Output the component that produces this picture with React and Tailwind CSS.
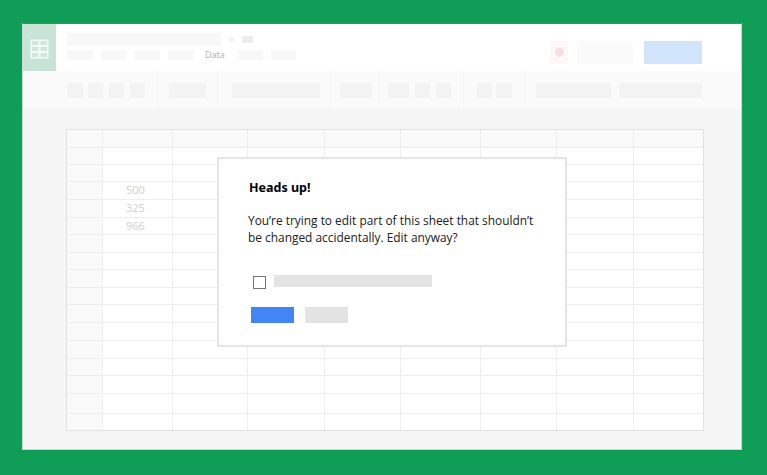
const colWidths = ['w-[36px]', 'w-[70px]', 'w-[75px]', 'w-[77px]', 'w-[76px]', 'w-[80px]', 'w-[76px]', 'w-[77px]', 'w-[71px]']
const rowHeights = ['h-[18px]', 'h-[17px]', 'h-[17px]', 'h-[18px]', 'h-[18px]', 'h-[17px]', 'h-[18px]', 'h-[17px]', 'h-[18px]', 'h-[17px]', 'h-[18px]', 'h-[18px]', 'h-[18px]', 'h-[17px]', 'h-[18px]', 'h-[20px]', 'h-[17px]']
const values = { 3: '500', 4: '325', 5: '966' }

function Sheet() {
    return (
        <div className="w-[638px] h-[302px] border border-[#e2e2e2] bg-white overflow-hidden">
            {rowHeights.map((height, r) => (
                <div key={r} className={`flex ${height} border-b border-[#eeeeee]`}>
                    {colWidths.map((width, c) => (
                        <div
                            key={c}
                            className={`${width} shrink-0 border-r border-[#eeeeee] ${c === 0 || r === 0 ? 'bg-[#f9f9f9]' : ''} ${c === 1 ? 'pl-[23px] text-[11px] leading-[16px] text-[#d2d2d2]' : ''}`}
                        >
                            {c === 1 ? values[r] : null}
                        </div>
                    ))}
                </div>
            ))}
        </div>
    )
}

function Block({ className }) {
    return <div className={`h-[15px] bg-[#f3f3f3] ${className}`} />
}

function Sep() {
    return <div className="w-px h-[38px] bg-[#f5f5f5]" />
}

function App() {
    return (
        <div className="w-[767px] h-[475px] bg-[#0f9d58] pt-[23px] pl-[22px] font-['Noto_Sans',sans-serif]">
            <div className="relative w-[720px] h-[427px] flex flex-col bg-[#f5f5f5] border border-[#cfd8d3] border-t-[#3d8f66]">
                {/* Header */}
                <div className="flex h-[47px] bg-white">
                    <div className="w-[33px] h-[47px] pt-[3px] bg-[#c7e4d6] flex items-center justify-center">
                        <svg width="19" height="20" viewBox="0 0 19 20">
                            <rect x="0.5" y="0.5" width="18" height="19" fill="#f4fbf7" />
                            <rect x="2" y="2" width="6.5" height="4" fill="#cfe8db" />
                            <rect x="10.5" y="2" width="6.5" height="4" fill="#cfe8db" />
                            <rect x="2" y="8" width="6.5" height="4" fill="#cfe8db" />
                            <rect x="10.5" y="8" width="6.5" height="4" fill="#cfe8db" />
                            <rect x="2" y="14" width="6.5" height="4" fill="#cfe8db" />
                            <rect x="10.5" y="14" width="6.5" height="4" fill="#cfe8db" />
                        </svg>
                    </div>
                    <div className="flex-1 pl-[11px] pt-[8px]">
                        <div className="flex items-center h-[14px]">
                            <div className="w-[154px] h-[13px] bg-[#f8f8f8]" />
                            <div className="ml-[8px] w-[5px] h-[5px] bg-[#f3f3f3]" />
                            <div className="ml-[8px] w-[11px] h-[7px] bg-[#ededed]" />
                        </div>
                        <div className="flex items-center h-[11px] mt-[3px]">
                            <div className="w-[26px] h-[10px] bg-[#f8f8f8]" />
                            <div className="ml-[8px] w-[25px] h-[10px] bg-[#f8f8f8]" />
                            <div className="ml-[8px] w-[26px] h-[10px] bg-[#f8f8f8]" />
                            <div className="ml-[8px] w-[26px] h-[10px] bg-[#f8f8f8]" />
                            <span className="ml-[11px] text-[9px] leading-[11px] text-[#b5b5b5]">Data</span>
                            <div className="ml-[13px] w-[25px] h-[10px] bg-[#f8f8f8]" />
                            <div className="ml-[8px] w-[25px] h-[10px] bg-[#f8f8f8]" />
                        </div>
                    </div>
                    <div className="flex items-start pt-[17px] pr-[39px]">
                        <div className="w-[18px] h-[23px] bg-[#fdf7f7] flex items-center justify-center">
                            <div className="w-[9px] h-[9px] rounded-full bg-[#f7dfe1]" />
                        </div>
                        <div className="ml-[9px] w-[56px] h-[23px] bg-[#fafafa]" />
                        <div className="ml-[11px] w-[58px] h-[23px] bg-[#d2e3fc]" />
                    </div>
                </div>

                {/* Toolbar */}
                <div className="flex items-center h-[38px] bg-[#fafafa] pl-[44px]">
                    <Block className="w-[16px]" />
                    <Block className="w-[15px] ml-[5px]" />
                    <Block className="w-[15px] ml-[6px]" />
                    <Block className="w-[15px] ml-[6px]" />
                    <div className="ml-[12px]"><Sep /></div>
                    <Block className="w-[37px] ml-[11px]" />
                    <div className="ml-[11px]"><Sep /></div>
                    <Block className="w-[88px] ml-[14px]" />
                    <div className="ml-[10px]"><Sep /></div>
                    <Block className="w-[32px] ml-[9px]" />
                    <div className="ml-[7px]"><Sep /></div>
                    <Block className="w-[21px] ml-[8px]" />
                    <Block className="w-[15px] ml-[6px]" />
                    <Block className="w-[15px] ml-[6px]" />
                    <div className="ml-[12px]"><Sep /></div>
                    <Block className="w-[15px] ml-[13px]" />
                    <Block className="w-[16px] ml-[4px]" />
                    <div className="ml-[12px]"><Sep /></div>
                    <Block className="w-[75px] ml-[11px]" />
                    <Block className="w-[83px] ml-[8px]" />
                </div>

                {/* Sheet */}
                <div className="pt-[20px] pl-[43px]">
                    <Sheet />
                </div>

                {/* Dialog */}
                <div className="absolute left-[194px] top-[133px] w-[350px] h-[190px] bg-white border-2 border-[#e5e5e5] pl-[29px] pt-[20px]">
                    <h2 className="text-[12.5px] leading-[18px] font-bold text-black ml-[1px]">Heads up!</h2>
                    <p className="mt-[15px] w-[292px] font-['Open_Sans',sans-serif] text-[11.9px] leading-[17px] text-[#212121]">
                        You’re trying to edit part of this sheet that shouldn’t be changed accidentally. Edit anyway?
                    </p>
                    <div className="flex items-start mt-[29px] ml-[5px]">
                        <div className="w-[13px] h-[13px] mt-[1px] border border-[#757575] bg-white" />
                        <div className="ml-[8px] w-[158px] h-[12px] bg-[#e3e3e3]" />
                    </div>
                    <div className="flex mt-[18px] ml-[3px]">
                        <div className="w-[43px] h-[16px] bg-[#4285f4]" />
                        <div className="ml-[11px] w-[43px] h-[16px] bg-[#e3e3e3]" />
                    </div>
                </div>
            </div>
        </div>
    )
}

export default App
